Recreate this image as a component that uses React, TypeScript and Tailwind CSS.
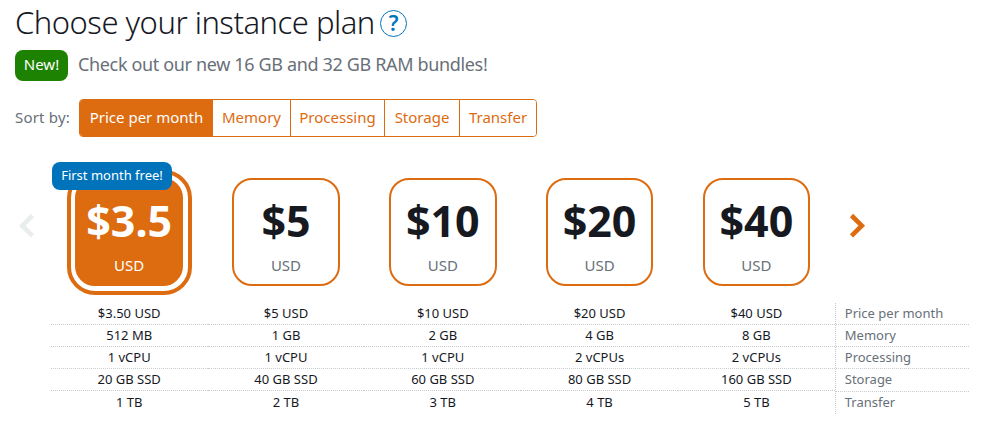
import React from 'react';
import clsx from 'clsx';

interface Plan {
  price: string;
  specs: string[];
  badge?: string;
  selected?: boolean;
}

const plans: Plan[] = [
  {
    price: '$3.5',
    specs: ['$3.50 USD', '512 MB', '1 vCPU', '20 GB SSD', '1 TB'],
    badge: 'First month free!',
    selected: true,
  },
  { price: '$5', specs: ['$5 USD', '1 GB', '1 vCPU', '40 GB SSD', '2 TB'] },
  { price: '$10', specs: ['$10 USD', '2 GB', '1 vCPU', '60 GB SSD', '3 TB'] },
  { price: '$20', specs: ['$20 USD', '4 GB', '2 vCPUs', '80 GB SSD', '4 TB'] },
  { price: '$40', specs: ['$40 USD', '8 GB', '2 vCPUs', '160 GB SSD', '5 TB'] },
];

const sortOptions = [
  { label: 'Price per month', width: 'w-[133px]' },
  { label: 'Memory', width: 'w-[77px]' },
  { label: 'Processing', width: 'w-[94px]' },
  { label: 'Storage', width: 'w-[75px]' },
  { label: 'Transfer', width: 'w-[77px]' },
];

const specLabels = sortOptions.map((option) => option.label);

const SortBar: React.FC<{ active: string }> = ({ active }) => (
  <div className="mt-[18px] flex h-[38px] items-center">
    <span className="w-16 pb-[2px] whitespace-nowrap text-[15px] tracking-[0.2px] text-[#687078]">Sort by:</span>
    <div className="flex h-full overflow-hidden rounded border border-[#dd6b10]">
      {sortOptions.map(({ label, width }, i) => (
        <button
          key={label}
          className={clsx(
            'h-full pb-[2px] whitespace-nowrap text-[15px]',
            width,
            i > 1 && 'border-l border-[#dd6b10]',
            label === active ? 'bg-[#dd6b10] text-white' : 'bg-white text-[#dd6b10]'
          )}
        >
          {label}
        </button>
      ))}
    </div>
  </div>
);

const Arrow: React.FC<{ direction: 'left' | 'right'; className?: string }> = ({ direction, className }) => (
  <svg width="18" height="26" viewBox="0 0 18 26" fill="none" stroke="currentColor" strokeWidth="4.6" className={className}>
    <path d={direction === 'left' ? 'M15.5 2.5 5.2 12.7l10.3 10.2' : 'M2.5 2.5l10.3 10.2L2.5 22.9'} />
  </svg>
);

const PlanCard: React.FC<{ plan: Plan }> = ({ plan }) => (
  <div className="relative flex w-[156.8px] justify-center">
    <div
      className={clsx(
        'relative flex h-[108px] w-[107.6px] flex-col items-center rounded-[20px] border-2 border-[#dd6b10]',
        plan.selected ? 'bg-[#dd6b10] text-white' : 'bg-white text-[#16191f]'
      )}
    >
      {/* Selection ring */}
      {plan.selected && (
        <span className="absolute -top-[10px] -right-[11px] -bottom-[11px] -left-[10px] rounded-[28px] border-4 border-[#dd6b10]" />
      )}
      <span className="mt-[11px] text-[43px] leading-[60px] font-bold">{plan.price}</span>
      <span className={clsx('mt-1 text-[15px] leading-5', !plan.selected && 'text-[#687078]')}>USD</span>
    </div>
    {plan.badge && (
      <span className="absolute -top-4 left-[1.2px] flex h-7 w-[120px] items-center justify-center rounded-lg bg-[#0073bb] text-[13px] whitespace-nowrap text-white">
        {plan.badge}
      </span>
    )}
  </div>
);

const SpecColumn: React.FC<{ specs: string[] }> = ({ specs }) => (
  <div className="w-[156.8px]">
    {specs.map((spec, i) => (
      <div
        key={i}
        className="h-[22px] border-b border-dotted border-[#c9cccc] text-center text-[13px] leading-[21px] text-[#16191f] last:border-b-0 last:pt-px"
      >
        {spec}
      </div>
    ))}
  </div>
);

export default function App() {
  return (
    <div className="h-[422px] w-[990px] overflow-hidden bg-white pl-[15px] font-['Noto_Sans',sans-serif]">
      <div className="flex h-[50px] items-start gap-[5px]">
        <h1 className="w-[360px] whitespace-nowrap text-[31px] leading-[45px] font-light tracking-[-0.5px] text-[#16191f]">
          Choose your instance plan
        </h1>
        <span className="mt-[10px] flex size-[27px] items-center justify-center rounded-full border border-[#0073bb] pb-px text-[21px] leading-none font-semibold text-[#0073bb]">
          ?
        </span>
      </div>

      <div className="flex h-[31px] items-center gap-[10px]">
        <span className="flex h-full w-[53px] items-center justify-center rounded-lg bg-[#1d8102] pb-[2px] text-[15px] text-white">
          New!
        </span>
        <span className="pb-[4px] whitespace-nowrap text-[18px] leading-[26px] tracking-[-0.35px] text-[#687078]">
          Check out our new 16 GB and 32 GB RAM bundles!
        </span>
      </div>

      <SortBar active="Price per month" />

      <div className="mt-[41px] flex">
        <div className="w-[35.8px] pt-[35px] pl-[2px]">
          <Arrow direction="left" className="text-[#eaeded]" />
        </div>
        {plans.map((plan) => (
          <PlanCard key={plan.price} plan={plan} />
        ))}
        <div className="pt-[35px] pl-[14px]">
          <Arrow direction="right" className="text-[#dd6b10]" />
        </div>
      </div>

      <div className="mt-[17px] flex pl-[35.8px]">
        {plans.map((plan) => (
          <SpecColumn key={plan.price} specs={plan.specs} />
        ))}
        <div className="w-[134px] border-l border-dotted border-[#c9cccc]">
          {specLabels.map((label) => (
            <div
              key={label}
              className="h-[22px] border-b border-dotted border-[#c9cccc] pl-[9px] text-[13px] leading-[21px] text-[#687078] last:border-b-0 nth-4:h-[23px]"
            >
              {label}
            </div>
          ))}
        </div>
      </div>
    </div>
  );
}
